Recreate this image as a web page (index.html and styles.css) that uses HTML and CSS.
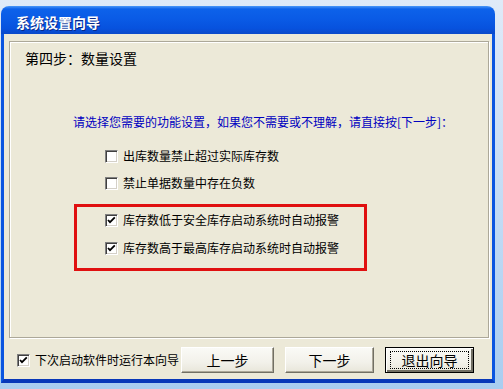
FILE: index.html
```html
<!DOCTYPE html>
<html lang="zh-CN">
<head>
    <meta charset="UTF-8">
    <title>系统设置向导</title>
    <link rel="stylesheet" href="styles.css">
</head>
<body>
    <div class="window">
        <div class="title-bar">系统设置向导</div>
        <div class="frame">
            <div class="panel">
                <div class="step-title">第四步：数量设置</div>
                <div class="options">
                    <p class="hint">请选择您需要的功能设置，如果您不需要或不理解，请直接按[下一步]：</p>

                    <label class="check-row row-1">
                        <span class="check"></span>
                        <span>出库数量禁止超过实际库存数</span>
                    </label>
                    <label class="check-row row-2">
                        <span class="check"></span>
                        <span>禁止单据数量中存在负数</span>
                    </label>

                    <div class="highlight">
                        <label class="check-row">
                            <span class="check checked">
                                <svg viewBox="0 0 11 11" width="11" height="11"><polyline points="2,5 4,7.2 8.8,2.4" fill="none" stroke="#000" stroke-width="1.8"/></svg>
                            </span>
                            <span>库存数低于安全库存启动系统时自动报警</span>
                        </label>
                        <label class="check-row row-4">
                            <span class="check checked">
                                <svg viewBox="0 0 11 11" width="11" height="11"><polyline points="2,5 4,7.2 8.8,2.4" fill="none" stroke="#000" stroke-width="1.8"/></svg>
                            </span>
                            <span>库存数高于最高库存启动系统时自动报警</span>
                        </label>
                    </div>
                </div>
            </div>

            <div class="footer">
                <label class="check-row startup">
                    <span class="check checked">
                        <svg viewBox="0 0 11 11" width="11" height="11"><polyline points="2,5 4,7.2 8.8,2.4" fill="none" stroke="#000" stroke-width="1.8"/></svg>
                    </span>
                    <span>下次启动软件时运行本向导</span>
                </label>
                <button class="btn btn-prev">上一步</button>
                <button class="btn">下一步</button>
                <button class="btn btn-default"><span class="focus">退出向导</span></button>
            </div>
        </div>
    </div>
</body>
</html>
```

FILE: styles.css
```css
/* Windows XP style wizard dialog */
:root {
    --face: #ece9d8;
    --xp-blue: #0a55e0;
    --xp-blue-dark: #0838b8;
    --etch-gray: #aca899;
    --hint-blue: #0000c0;
    --alert-red: #e01010;
}

* {
    box-sizing: border-box;
    margin: 0;
    padding: 0;
}

body {
    width: 503px;
    height: 389px;
    overflow: hidden;
    background: linear-gradient(180deg, #dfeaf8 0%, #c4dcf5 50%, #a9cdf0 100%);
    font-family: "Noto Sans CJK SC", "DejaVu Sans", sans-serif;
    font-size: 12px;
    color: #000;
}

.window {
    width: 494px;
    margin: 6px 0 0 1px;
    border-radius: 8px 8px 0 0;
    overflow: hidden;
}

.title-bar {
    height: 28px;
    padding: 3px 0 0 15px;
    display: flex;
    align-items: center;
    background: linear-gradient(180deg, #4b97f8 0px, #0d62ea 3px, #0a5be6 45%, #0752de 80%, #0a49c9 100%);
    color: #fff;
    font-size: 14px;
    font-weight: bold;
    text-shadow: 1px 1px 0 #0a2a8a;
}

.frame {
    background: var(--face);
    border: 3px solid var(--xp-blue);
    border-top: 0;
    border-bottom: 4px solid var(--xp-blue-dark);
    padding: 7px 3px 0 5px;
}

.panel {
    height: 297px;
    border: 1px solid var(--etch-gray);
    box-shadow: inset 1px 1px 0 #fff, 1px 1px 0 #fff;
}

.step-title {
    font-size: 14px;
    line-height: 16px;
    margin: 8px 0 0 15px;
}

.options {
    margin-left: 63px;
}

.hint {
    color: var(--hint-blue);
    line-height: 16px;
    margin-top: 48px;
}

.check-row {
    display: flex;
    align-items: center;
    gap: 5px;
    height: 16px;
    line-height: 16px;
}

.options > .check-row {
    padding-left: 32px;
}

.row-1 {
    margin-top: 18px;
}

.row-2 {
    margin-top: 11px;
}

.check {
    width: 13px;
    height: 13px;
    flex: none;
    background: #fff;
    border: 1px solid;
    border-color: #808080 #fff #fff #808080;
    box-shadow: inset 1px 1px 0 #404040, inset -1px -1px 0 #d4d0c8;
    display: flex;
    align-items: center;
    justify-content: center;
}

.check svg {
    display: block;
}

.highlight {
    width: 293px;
    margin: 13px 0 0 1px;
    border: 3px solid var(--alert-red);
    padding: 5px 0 12px 28px;
}

.row-4 {
    margin-top: 12px;
}

.footer {
    display: flex;
    align-items: center;
    padding: 9px 15px 6px 8px;
}

.btn {
    height: 26px;
    width: 89px;
    margin-left: 11px;
    font-family: inherit;
    font-size: 14px;
    color: #000;
    background: linear-gradient(180deg, #fafaf6 0%, #f2f1ea 60%, #e8e6da 100%);
    border: 1px solid;
    border-color: #fff #716f64 #716f64 #fff;
    box-shadow: inset -1px -1px 0 #aca899;
    display: flex;
    align-items: center;
    justify-content: center;
}

.btn-prev {
    width: 93px;
    margin-left: auto;
}

.btn-default {
    border: 1px solid #000;
    box-shadow: inset 1px 1px 0 #fff, inset -2px -2px 0 #716f64;
}

.focus {
    display: block;
    width: 79px;
    height: 18px;
    line-height: 16px;
    border: 1px dotted #000;
    text-align: center;
}
```
